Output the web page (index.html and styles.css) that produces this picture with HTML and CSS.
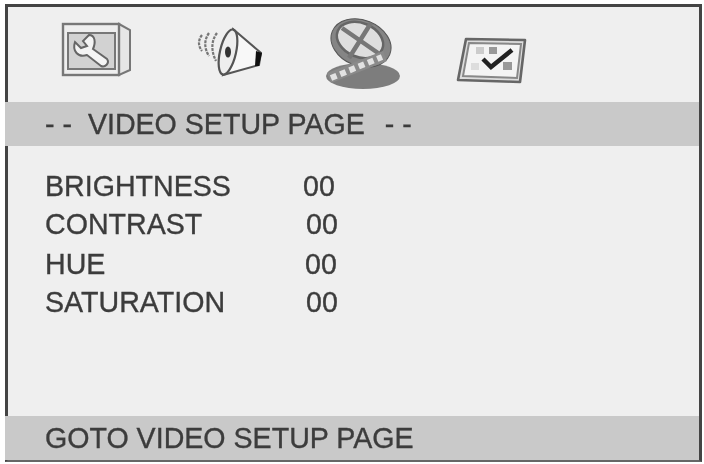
FILE: index.html
```html
<!DOCTYPE html>
<html>
	<head>
		<meta charset="utf-8">
		<title>Video setup page</title>
		<link rel="stylesheet" href="styles.css">
	</head>
	<body>
		<div class="screen">
			<div class="icons">
				<!-- wrench -->
				<svg class="icon icon_wrench" width="72" height="58" viewBox="0 0 72 58">
					<path d="M59 4 L70 10 L70 50 L59 55 Z" fill="#e6e6e6" stroke="#777" stroke-width="2"/>
					<rect x="3" y="4" width="56" height="51" fill="#eee" stroke="#777" stroke-width="2.4"/>
					<rect x="8" y="13" width="47" height="36" fill="#d2d2d2" stroke="#777" stroke-width="2"/>
					<path d="M29 15 L23 21 L27 26 L21 28 L15 22 C12 31 18 38 27 35 L41 46 C45 48 50 43 47 39 L33 29 C36 22 35 15 29 15 Z" fill="#f4f4f4" stroke="#666" stroke-width="2"/>
				</svg>
				<!-- speaker -->
				<svg class="icon icon_speaker" width="70" height="52" viewBox="0 0 70 52">
					<g fill="none" stroke="#777" stroke-width="2.2" stroke-dasharray="3 1">
						<path d="M6 9 C2 14 2 20 6 25"/>
						<path d="M13 7 C8 14 8 22 13 30"/>
						<path d="M21 7 C15 15 15 25 20 35"/>
					</g>
					<path d="M37 3 L65 27 L63 39 L27 49 Z" fill="#f8f8f8" stroke="#555" stroke-width="2"/>
					<path d="M60 25 L66 27 L63 40 L59 40 Z" fill="#111"/>
					<ellipse cx="32" cy="26" rx="8" ry="23" transform="rotate(13 32 26)" fill="#eee" stroke="#555" stroke-width="2.2"/>
					<ellipse cx="32" cy="26" rx="3" ry="5.5" fill="#333"/>
				</svg>
				<!-- film reel -->
				<svg class="icon icon_reel" width="78" height="72" viewBox="0 0 78 72">
					<ellipse cx="39" cy="58" rx="37" ry="13" fill="#7d7d7d"/>
					<ellipse cx="37" cy="25" rx="31" ry="23" transform="rotate(22 37 25)" fill="#858585" stroke="#555"/>
					<ellipse cx="36" cy="22" rx="24" ry="17" transform="rotate(22 36 22)" fill="#dedede" stroke="#666" stroke-width="2.5"/>
					<path d="M18 10 L54 35 M47 5 L25 40" stroke="#777" stroke-width="4.5"/>
					<path d="M5 60 L61 38" stroke="#8a8a8a" stroke-width="11"/>
					<path d="M7 60 L58 39" stroke="#e2e2e2" stroke-width="6" stroke-dasharray="6 4"/>
				</svg>
				<!-- check -->
				<svg class="icon icon_check" width="72" height="48" viewBox="0 0 72 48">
					<path d="M10 2 L69 3 L64 45 L2 43 Z" fill="#ddd" stroke="#666" stroke-width="2.6" stroke-linejoin="round"/>
					<path d="M13 6 L65 7 L61 41 L7 39 Z" fill="#f4f4f4" stroke="#888" stroke-width="2"/>
					<rect x="20" y="10" width="8" height="7" fill="#ccc"/>
					<rect x="33" y="10" width="8" height="7" fill="#999"/>
					<rect x="15" y="26" width="8" height="7" fill="#ddd"/>
					<rect x="47" y="25" width="9" height="8" fill="#999"/>
					<path d="M27 22 L35 30 L56 13" fill="none" stroke="#222" stroke-width="4.5"/>
				</svg>
			</div>
			<div class="bar title">- -  VIDEO SETUP PAGE  <span class="end_dash">- -</span></div>
			<div class="list">
				<div class="row"><span>BRIGHTNESS</span><span>00</span></div>
				<div class="row row_b"><span>CONTRAST</span><span>00</span></div>
				<div class="row row_c"><span>HUE</span><span>00</span></div>
				<div class="row row_b"><span>SATURATION</span><span>00</span></div>
			</div>
			<div class="bar foot">GOTO VIDEO SETUP PAGE</div>
		</div>
	</body>
</html>
```

FILE: styles.css
```css
*{ margin: 0; padding: 0; box-sizing: border-box; }
html{ background-color: #fff; }
body{ font-family: "Liberation Sans", Arial, sans-serif; font-size: 28.6px; color: #3c3c3c; -webkit-text-stroke: 0.35px #3c3c3c; }
.screen{
	margin: 4px 2px 0 5px;
	height: 458px;
	border: 3px solid #444;
	border-bottom: 2px solid #666;
	background-color: #efefef;
	display: flex;
	flex-direction: column;
	filter: blur(0.5px);
}
.icons{ height: 95px; flex: none; display: flex; }
.icon{ flex: none; }
.icon_wrench{ margin: 13px 0 0 52px; }
.icon_speaker{ margin: 19px 0 0 64px; }
.icon_reel{ margin: 11px 0 0 58px; }
.icon_check{ margin: 30px 0 0 54px; }
.bar{
	height: 44px;
	line-height: 44px;
	background-color: #c9c9c9;
	flex: none;
	margin-left: -3px;
	padding-left: 40px;
	white-space: pre;
}
.end_dash{ margin-left: 4px; }
.list{ flex: 1; padding: 21px 0 0 37px; }
.row{ display: grid; grid-template-columns: 258px auto; height: 38px; line-height: 38px; }
.row_b span:last-child{ padding-left: 3px; }
.row_c{ height: 40px; line-height: 42px; }
.row_c span:last-child{ padding-left: 2px; }
```
